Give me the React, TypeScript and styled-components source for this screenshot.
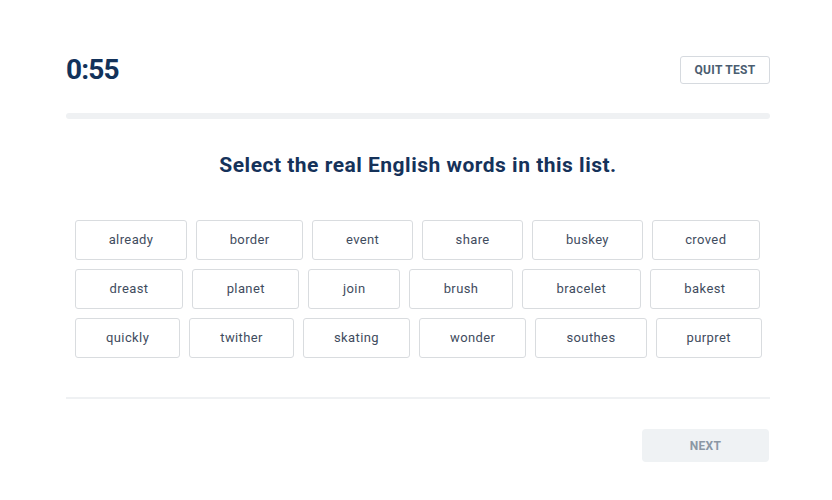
import React from "react";
import styled, { createGlobalStyle } from "styled-components";

const Global = createGlobalStyle`
  html, body { margin: 0; padding: 0; background: #ffffff; }
  body { font-family: Roboto, "Noto Sans", sans-serif; }
`;

const Page = styled.div`
  width: 832px;
  height: 500px;
  box-sizing: border-box;
  padding: 56px 62px 0 66px;
  display: flex;
  flex-direction: column;
`;

const Header = styled.div`
  display: flex;
  align-items: center;
  justify-content: space-between;
  height: 28px;
`;

const Timer = styled.div`
  font-size: 28px;
  font-weight: 700;
  color: #12325a;
  letter-spacing: -0.8px;
  line-height: 28px;
`;

const QuitButton = styled.button`
  width: 90px;
  height: 28px;
  border: 1px solid #d6dadf;
  border-radius: 3px;
  background: #fff;
  font-family: Roboto, sans-serif;
  font-size: 12px;
  font-weight: 700;
  color: #4b5d70;
  letter-spacing: 0.3px;
  padding: 0;
`;

const Progress = styled.div`
  margin-top: 29px;
  height: 6px;
  border-radius: 3px;
  background: #eff1f3;
`;

const Question = styled.h1`
  margin: 34px 0 0;
  text-align: center;
  font-size: 21px;
  font-weight: 700;
  color: #15325a;
  line-height: 24px;
  letter-spacing: 0.5px;
`;

const Words = styled.div`
  margin-top: 43px;
  padding: 0 10px 0 9px;
  display: flex;
  flex-direction: column;
  gap: 9px;
`;

const Row = styled.div`
  display: flex;
  gap: 9px;
`;

const Word = styled.button`
  flex: 1 1 auto;
  height: 40px;
  padding: 0 30px 1px;
  border: 1px solid #d9dcdf;
  border-radius: 3px;
  background: #fff;
  font-family: Roboto, sans-serif;
  font-size: 13px;
  font-weight: 400;
  color: #3f4c5e;
  letter-spacing: 0.4px;
`;

const Divider = styled.div`
  margin-top: 39px;
  height: 2px;
  background: #eff1f3;
`;

const Footer = styled.div`
  display: flex;
  justify-content: flex-end;
  margin-top: 30px;
`;

const NextButton = styled.button`
  width: 127px;
  height: 33px;
  margin-right: 1px;
  border: none;
  border-radius: 4px;
  background: #eff2f4;
  font-family: Roboto, sans-serif;
  font-size: 12px;
  font-weight: 700;
  color: #8b97a4;
  letter-spacing: 0.3px;
`;

const rows = [
  ["already", "border", "event", "share", "buskey", "croved"],
  ["dreast", "planet", "join", "brush", "bracelet", "bakest"],
  ["quickly", "twither", "skating", "wonder", "southes", "purpret"],
];

export default function App() {
  return (
    <>
      <Global />
      <Page>
        <Header>
          <Timer>0:55</Timer>
          <QuitButton>QUIT TEST</QuitButton>
        </Header>
        <Progress />
        <Question>Select the real English words in this list.</Question>
        <Words>
          {rows.map((r, i) => (
            <Row key={i}>
              {r.map((w) => (
                <Word key={w}>{w}</Word>
              ))}
            </Row>
          ))}
        </Words>
        <Divider />
        <Footer>
          <NextButton>NEXT</NextButton>
        </Footer>
      </Page>
    </>
  );
}
